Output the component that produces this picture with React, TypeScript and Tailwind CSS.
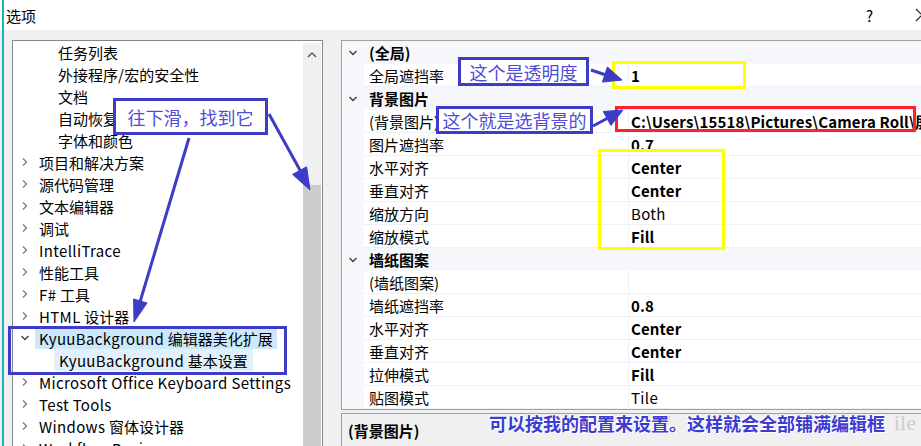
import React from "react";

const RightChev = () => (
  <svg width="8" height="10" viewBox="0 0 8 10">
    <path d="M2 1.5 L5.5 5 L2 8.5" fill="none" stroke="#808080" strokeWidth="1.4" />
  </svg>
);
const DownChev = () => (
  <svg width="10" height="8" viewBox="0 0 10 8">
    <path d="M1.5 2 L5 5.5 L8.5 2" fill="none" stroke="#404040" strokeWidth="1.4" />
  </svg>
);

const CJK = /([\u2E80-\u9FFF\uFF00-\uFFEF\u3000-\u303F]+)/;

function T({ s, bold = false }: { s: string; bold?: boolean }) {
  return (
    <span>
      {s.split(CJK).map((p, i) =>
        p === "" ? null : CJK.test(p) ? (
          <span key={i}>{p}</span>
        ) : (
          <span key={i} className={bold ? "tracking-[0.15px]" : "tracking-[0.35px]"}>
            {p}
          </span>
        )
      )}
    </span>
  );
}

type TreeItem = { label: string; level: 0 | 1; chev?: "r" | "d"; hl?: 0 | 1 | 2 };

const tree: TreeItem[] = [
  { label: "任务列表", level: 1 },
  { label: "外接程序/宏的安全性", level: 1 },
  { label: "文档", level: 1 },
  { label: "自动恢复", level: 1 },
  { label: "字体和颜色", level: 1 },
  { label: "项目和解决方案", level: 0, chev: "r" },
  { label: "源代码管理", level: 0, chev: "r" },
  { label: "文本编辑器", level: 0, chev: "r" },
  { label: "调试", level: 0, chev: "r" },
  { label: "IntelliTrace", level: 0, chev: "r" },
  { label: "性能工具", level: 0, chev: "r" },
  { label: "F# 工具", level: 0, chev: "r" },
  { label: "HTML 设计器", level: 0, chev: "r" },
  { label: "KyuuBackground 编辑器美化扩展", level: 0, chev: "d", hl: 1 },
  { label: "KyuuBackground 基本设置", level: 1, hl: 2 },
  { label: "Microsoft Office Keyboard Settings", level: 0, chev: "r" },
  { label: "Test Tools", level: 0, chev: "r" },
  { label: "Windows 窗体设计器", level: 0, chev: "r" },
  { label: "Workflow Designer", level: 0, chev: "r" },
];

type Row =
  | { kind: "cat"; label: string }
  | { kind: "prop"; name: string; value?: string; bold?: boolean };

const rows: Row[] = [
  { kind: "cat", label: "(全局)" },
  { kind: "prop", name: "全局遮挡率", value: "1", bold: true },
  { kind: "cat", label: "背景图片" },
  { kind: "prop", name: "(背景图片)", value: "C:\\Users\\15518\\Pictures\\Camera Roll\\屏幕截图.png", bold: true },
  { kind: "prop", name: "图片遮挡率", value: "0.7", bold: true },
  { kind: "prop", name: "水平对齐", value: "Center", bold: true },
  { kind: "prop", name: "垂直对齐", value: "Center", bold: true },
  { kind: "prop", name: "缩放方向", value: "Both" },
  { kind: "prop", name: "缩放模式", value: "Fill", bold: true },
  { kind: "cat", label: "墙纸图案" },
  { kind: "prop", name: "(墙纸图案)", value: "" },
  { kind: "prop", name: "墙纸遮挡率", value: "0.8", bold: true },
  { kind: "prop", name: "水平对齐", value: "Center", bold: true },
  { kind: "prop", name: "垂直对齐", value: "Center", bold: true },
  { kind: "prop", name: "拉伸模式", value: "Fill", bold: true },
  { kind: "prop", name: "贴图模式", value: "Tile" },
];

function TreeRow({ item }: { item: TreeItem }) {
  return (
    <div className="flex h-[22px] items-center whitespace-nowrap">
      {item.level === 0 ? (
        <div className="flex w-[21px] shrink-0 justify-center">
          {item.chev === "r" ? <RightChev /> : <DownChev />}
        </div>
      ) : (
        <div className="w-[40px] shrink-0" />
      )}
      <span
        className={
          item.hl === 1
            ? "flex h-[21px] items-center bg-[#cce8fb] px-[4px]"
            : item.hl === 2
            ? "flex h-[22px] items-center bg-[#e1f0fb] px-[5px]"
            : "px-[4px]"
        }
      >
        <T s={item.label} />
      </span>
    </div>
  );
}

function GridRow({ row }: { row: Row }) {
  if (row.kind === "cat") {
    return (
      <div className="flex h-[23px] items-center bg-[#f5f7fb]">
        <div className="flex w-[22px] shrink-0 justify-center">
          <DownChev />
        </div>
        <span className="pl-[5px] font-bold">{row.label}</span>
      </div>
    );
  }
  return (
    <div className="flex h-[23px]">
      <div className="w-[22px] shrink-0 bg-[#f5f7fb]" />
      <div className="flex w-[264px] shrink-0 items-center border-b border-[#eef2f8] bg-white pl-[5px]">
        {row.name}
      </div>
      <div
        className={
          "flex min-w-0 flex-1 items-center overflow-hidden whitespace-nowrap border-b border-l border-[#eef2f8] bg-white pl-[2px] " +
          (row.bold ? "font-bold" : "")
        }
      >
        <T s={row.value ?? ""} bold={!!row.bold} />
      </div>
    </div>
  );
}

export default function App() {
  return (
    <div className="relative h-[446px] w-[921px] overflow-hidden bg-[#f0f0f0] font-['Noto_Sans_CJK_SC','Noto_Sans',sans-serif] text-[15px] leading-none text-black">
      {/* title bar */}
      <div className="flex h-[30px] items-center bg-white pl-[6px]">
        <span>选项</span>
        <span className="ml-auto text-[15px]">?</span>
        <span className="ml-[42px] mr-[-8px] flex items-center">
          <svg width="14" height="14" viewBox="0 0 14 14">
            <path d="M1 1 L13 13 M13 1 L1 13" stroke="#222" strokeWidth="1.2" />
          </svg>
        </span>
      </div>

      {/* body */}
      <div className="flex gap-[18px] pl-[12px] pt-[10px]">
        {/* tree */}
        <div className="flex h-[420px] w-[311px] shrink-0 border border-[#828790] bg-white">
          <div className="flex-1 overflow-hidden pl-[1px] pt-0">
            {tree.map((t, i) => (
              <TreeRow key={i} item={t} />
            ))}
          </div>
          <div className="mr-[1px] mt-[2px] flex w-[18px] shrink-0 flex-col bg-[#f0f0f0]">
            <div className="flex h-[22px] items-center justify-center">
              <svg width="10" height="7" viewBox="0 0 10 7">
                <path d="M1 6 L5 2 L9 6" fill="none" stroke="#606060" strokeWidth="1.5" />
              </svg>
            </div>
            <div className="h-[120px]" />
            <div className="flex-1 bg-[#cdcdcd]" />
          </div>
        </div>

        {/* right side */}
        <div className="flex w-[640px] shrink-0 flex-col">
          <div className="h-[370px] border border-[#a0a0a0] bg-white">
            {rows.map((r, i) => (
              <GridRow key={i} row={r} />
            ))}
          </div>
          <div className="mt-[3px] h-[60px] border border-[#a0a0a0] bg-[#f0f0f0] pl-[6px] pt-[9px] font-bold">
            (背景图片)
          </div>
        </div>
      </div>

      {/* left teal edge */}
      <div className="absolute bottom-0 left-[2px] top-0 w-[2px] bg-[#1cb3bd]" />

      {/* annotations */}
      <div className="absolute left-[113px] top-[98px] flex h-[37px] w-[155px] items-center justify-center border-[3px] border-[#3c3cc6] bg-white text-[18px] text-[#4e4ed8]">
        往下滑，找到它
      </div>
      <div className="absolute left-[8px] top-[326px] h-[49px] w-[279px] border-[3px] border-[#3c3cc6]" />

      <div className="absolute left-[458px] top-[57px] flex h-[29px] w-[131px] items-center justify-center border-[3px] border-[#3c3cc6] bg-white text-[18px] text-[#4e4ed8]">
        这个是透明度
      </div>
      <div className="absolute left-[436px] top-[106px] flex h-[28px] w-[157px] items-center justify-center border-[3px] border-[#3c3cc6] bg-white text-[18px] text-[#4e4ed8]">
        这个就是选背景的
      </div>

      <div className="absolute left-[612px] top-[61px] h-[28px] w-[134px] border-[3px] border-[#ffff00]" />
      <div className="absolute left-[615px] top-[106px] h-[26px] w-[301px] border-[3px] border-[#ff1f2f]" />
      <div className="absolute left-[598px] top-[149px] h-[101px] w-[127px] border-[3px] border-[#ffff00]" />

      {/* watermark + bottom caption */}
      <div className="absolute left-[658px] top-[412px] flex w-[258px] justify-between whitespace-nowrap font-['Liberation_Serif',serif] text-[22px] text-[#cdcdcd]">
        <span>//</span>
        <span>ile</span>
      </div>
      <div className="absolute left-[489px] top-[412px] whitespace-nowrap text-[18px] font-bold leading-[22px] text-[#3c3cd0] [text-shadow:0_0_2px_#ffffff,1px_1px_0_#ffffff,-1px_-1px_0_#ffffff]">
        可以按我的配置来设置。这样就会全部铺满编辑框
      </div>

      {/* arrows */}
      <svg className="pointer-events-none absolute left-0 top-0" width="921" height="446">
        <g stroke="#3c3cc8" strokeWidth="3" fill="#3c3cc8">
          <line x1="189" y1="138" x2="140" y2="302" />
          <polygon points="134,322 147,303 133.6,299" strokeWidth="1" />
          <line x1="269" y1="114" x2="301" y2="172" />
          <polygon points="310,190 306.6,166.8 292.6,174.4" strokeWidth="1" />
          <line x1="591" y1="70" x2="606" y2="75" />
          <polygon points="622,80 607.4,66.9 602.4,82.1" strokeWidth="1" />
          <line x1="593" y1="126" x2="608" y2="118" />
          <polygon points="623,110 603.3,111.5 610.9,125.5" strokeWidth="1" />
        </g>
      </svg>
    </div>
  );
}
